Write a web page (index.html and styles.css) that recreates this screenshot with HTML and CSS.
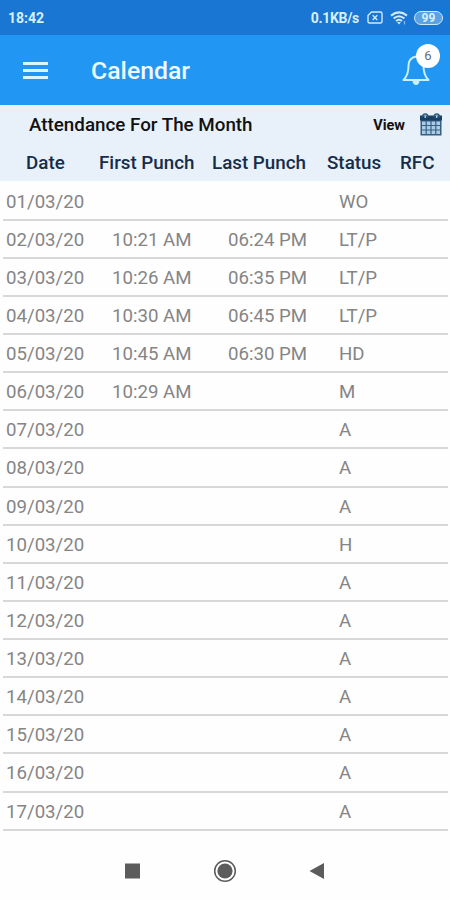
FILE: index.html
```html
<!DOCTYPE html>
<html lang="en">
<head>
    <meta charset="UTF-8">
    <meta name="viewport" content="width=device-width, initial-scale=1.0">
    <title>Calendar</title>
    <link rel="stylesheet" href="styles.css">
</head>
<body>
    <div class="status-bar">
        <span class="clock">18:42</span>
        <span class="speed">0.1KB/s</span>
        <svg class="sim-icon" width="16" height="13" viewBox="0 0 16 13" fill="none" stroke="#cfeaff" stroke-width="1.4">
            <path d="M4.5 1H13.5Q15 1 15 2.500V10.500Q15 12 13.500 12H2.500Q1 12 1 10.500V4.500Z"/>
            <path d="M5.700 4.300L10.300 8.900M10.300 4.300L5.700 8.900"/>
        </svg>
        <svg class="wifi-icon" width="18" height="14" viewBox="0 0 18 14" fill="none" stroke="#cfeaff" stroke-width="2">
            <path d="M1 4.600Q9 -1.800 17 4.600"/>
            <path d="M3.600 7.500Q9 3 14.400 7.500"/>
            <path d="M6 10Q9 7.500 12 10"/>
            <path d="M7 11L9 13.500L11 11Z" fill="#cfeaff" stroke="none"/>
            <path d="M14.500 10V13.500" stroke-width="1.200" opacity="0.6"/>
        </svg>
        <span class="battery">99</span>
    </div>

    <header class="app-bar">
        <button class="menu-button" aria-label="Menu">
            <span></span>
            <span></span>
            <span></span>
        </button>
        <h1>Calendar</h1>
        <div class="notifications">
            <svg width="28" height="32" viewBox="0 0 28 32" fill="none" stroke="#c9f0ff" stroke-width="2" stroke-linejoin="round">
                <path d="M14 2.500C8.500 3.500 6.500 7.500 6.500 12C6.500 18 5.500 22 1.500 26H26.500C22.500 22 21.500 18 21.500 12C21.500 7.500 19.500 3.500 14 2.500Z"/>
                <path d="M10.500 27H17.500Q17 31 14 31Q11 31 10.500 27Z" fill="#c9f0ff" stroke="none"/>
            </svg>
            <span class="badge">6</span>
        </div>
    </header>

    <section class="table-head">
        <div class="title-row">
            <h2>Attendance For The Month</h2>
            <span class="view">View</span>
            <svg width="22" height="23" viewBox="0 0 22 23">
                <rect x="0.500" y="3" width="21" height="19.500" fill="#365f84"/>
                <rect x="0" y="2.500" width="22" height="5" fill="#173f63"/>
                <path d="M2.500 4.500Q2.500 1 5.300 1Q8 1 8 4.500M14 4.500Q14 1 16.700 1Q19.500 1 19.500 4.500" fill="none" stroke="#31597c" stroke-width="1.400"/>
                <path d="M5.300 2.500V5M16.700 2.500V5" stroke="#a9c8dd" stroke-width="1.600"/>
                <g fill="#abcce4">
                    <path d="M2 8.500h3.600v3.600h-3.600zM6.800 8.500h3.600v3.600h-3.600zM11.600 8.500h3.600v3.600h-3.600zM16.400 8.500h3.600v3.600h-3.600z"/>
                    <path d="M2 13h3.600v3.600h-3.600zM6.800 13h3.600v3.600h-3.600zM11.600 13h3.600v3.600h-3.600zM16.400 13h3.600v3.600h-3.600z"/>
                    <path d="M2 17.500h3.600v3.600h-3.600zM6.800 17.500h3.600v3.600h-3.600zM11.600 17.500h3.600v3.600h-3.600zM16.400 17.500h3.600v3.600h-3.600z"/>
                </g>
            </svg>
        </div>
        <div class="columns">
            <span>Date</span>
            <span>First Punch</span>
            <span>Last Punch</span>
            <span>Status</span>
            <span>RFC</span>
        </div>
    </section>

    <main class="days">
        <div class="day"><span>01/03/20</span><span></span><span></span><span>WO</span></div>
        <div class="day"><span>02/03/20</span><span>10:21 AM</span><span>06:24 PM</span><span>LT/P</span></div>
        <div class="day"><span>03/03/20</span><span>10:26 AM</span><span>06:35 PM</span><span>LT/P</span></div>
        <div class="day"><span>04/03/20</span><span>10:30 AM</span><span>06:45 PM</span><span>LT/P</span></div>
        <div class="day"><span>05/03/20</span><span>10:45 AM</span><span>06:30 PM</span><span>HD</span></div>
        <div class="day"><span>06/03/20</span><span>10:29 AM</span><span></span><span>M</span></div>
        <div class="day"><span>07/03/20</span><span></span><span></span><span>A</span></div>
        <div class="day"><span>08/03/20</span><span></span><span></span><span>A</span></div>
        <div class="day"><span>09/03/20</span><span></span><span></span><span>A</span></div>
        <div class="day"><span>10/03/20</span><span></span><span></span><span>H</span></div>
        <div class="day"><span>11/03/20</span><span></span><span></span><span>A</span></div>
        <div class="day"><span>12/03/20</span><span></span><span></span><span>A</span></div>
        <div class="day"><span>13/03/20</span><span></span><span></span><span>A</span></div>
        <div class="day"><span>14/03/20</span><span></span><span></span><span>A</span></div>
        <div class="day"><span>15/03/20</span><span></span><span></span><span>A</span></div>
        <div class="day"><span>16/03/20</span><span></span><span></span><span>A</span></div>
        <div class="day"><span>17/03/20</span><span></span><span></span><span>A</span></div>
    </main>

    <nav class="nav-bar">
        <svg width="16" height="16" viewBox="0 0 16 16"><rect x="0" y="0.500" width="15" height="15" fill="#5c5c5c"/></svg>
        <svg width="24" height="24" viewBox="0 0 24 24">
            <circle cx="12" cy="12" r="10.300" fill="none" stroke="#5c5c5c" stroke-width="1.500"/>
            <circle cx="12" cy="12" r="7.600" fill="#5c5c5c"/>
        </svg>
        <svg width="16" height="16" viewBox="0 0 16 16"><path d="M15 0V16L0.500 8Z" fill="#5c5c5c"/></svg>
    </nav>
</body>
</html>
```
FILE: styles.css
```css
* {
    margin: 0;
    padding: 0;
    box-sizing: border-box;
}

body {
    width: 450px;
    height: 900px;
    font-family: Roboto, sans-serif;
    background: #fefefe;
    overflow: hidden;
}

.status-bar {
    display: flex;
    align-items: center;
    height: 35px;
    padding: 0 7px 0 8px;
    background: #1976d2;
    color: #d8efff;
    font-size: 14px;
    font-weight: 700;
}

.speed {
    margin-left: auto;
    font-size: 14px;
    letter-spacing: -0.3px;
}

.sim-icon {
    margin-left: 8px;
}

.wifi-icon {
    margin-left: 7px;
}

.battery {
    width: 29px;
    height: 14px;
    margin-left: 6px;
    border: 1.5px solid #cfeaff;
    border-radius: 7px;
    background: #5ba2e2;
    font-size: 12px;
    line-height: 12px;
    text-align: center;
}

.app-bar {
    display: flex;
    align-items: center;
    height: 70px;
    padding: 0 20px 0 23px;
    background: #2196f3;
}

.menu-button {
    display: flex;
    flex-direction: column;
    gap: 4px;
    width: 25px;
    border: none;
    background: none;
}

.menu-button span {
    width: 25px;
    height: 3px;
    background: #d9f5ff;
}

.app-bar h1 {
    margin-left: 43px;
    padding-top: 1px;
    color: #eefaff;
    font-size: 24.8px;
    font-weight: 500;
}

.notifications {
    position: relative;
    height: 32px;
    margin-left: auto;
}

.badge {
    position: absolute;
    top: -10px;
    right: -10px;
    width: 24px;
    height: 24px;
    border-radius: 50%;
    background: #fff;
    color: #5d6b78;
    font-size: 13px;
    line-height: 24px;
    text-align: center;
}

.table-head {
    height: 76px;
    background: #e8f0f9;
}

.title-row {
    display: flex;
    align-items: center;
    height: 39px;
    padding: 0 8px 0 29px;
    color: #111;
}

.title-row h2 {
    font-size: 18.8px;
    font-weight: 500;
}

.view {
    margin-left: auto;
    margin-right: 15px;
    padding-top: 1px;
    font-size: 14.5px;
    font-weight: 700;
}

.columns {
    display: grid;
    grid-template-columns: 73px 113px 115px 73px 1fr;
    height: 37px;
    padding-left: 26px;
    line-height: 39px;
    color: #152d4a;
    font-size: 18.8px;
    font-weight: 500;
}

.days {
    padding: 1.5px 2px 0 3px;
}

.day {
    display: grid;
    grid-template-columns: 106px 116px 111px 1fr;
    height: 38.125px;
    padding-left: 3px;
    border-bottom: 2px solid #d8d8d8;
    line-height: 38px;
    color: #858585;
    font-size: 18.65px;
}

.nav-bar {
    display: flex;
    align-items: center;
    justify-content: center;
    gap: 72px;
    height: 70px;
    padding-top: 10px;
}
```
